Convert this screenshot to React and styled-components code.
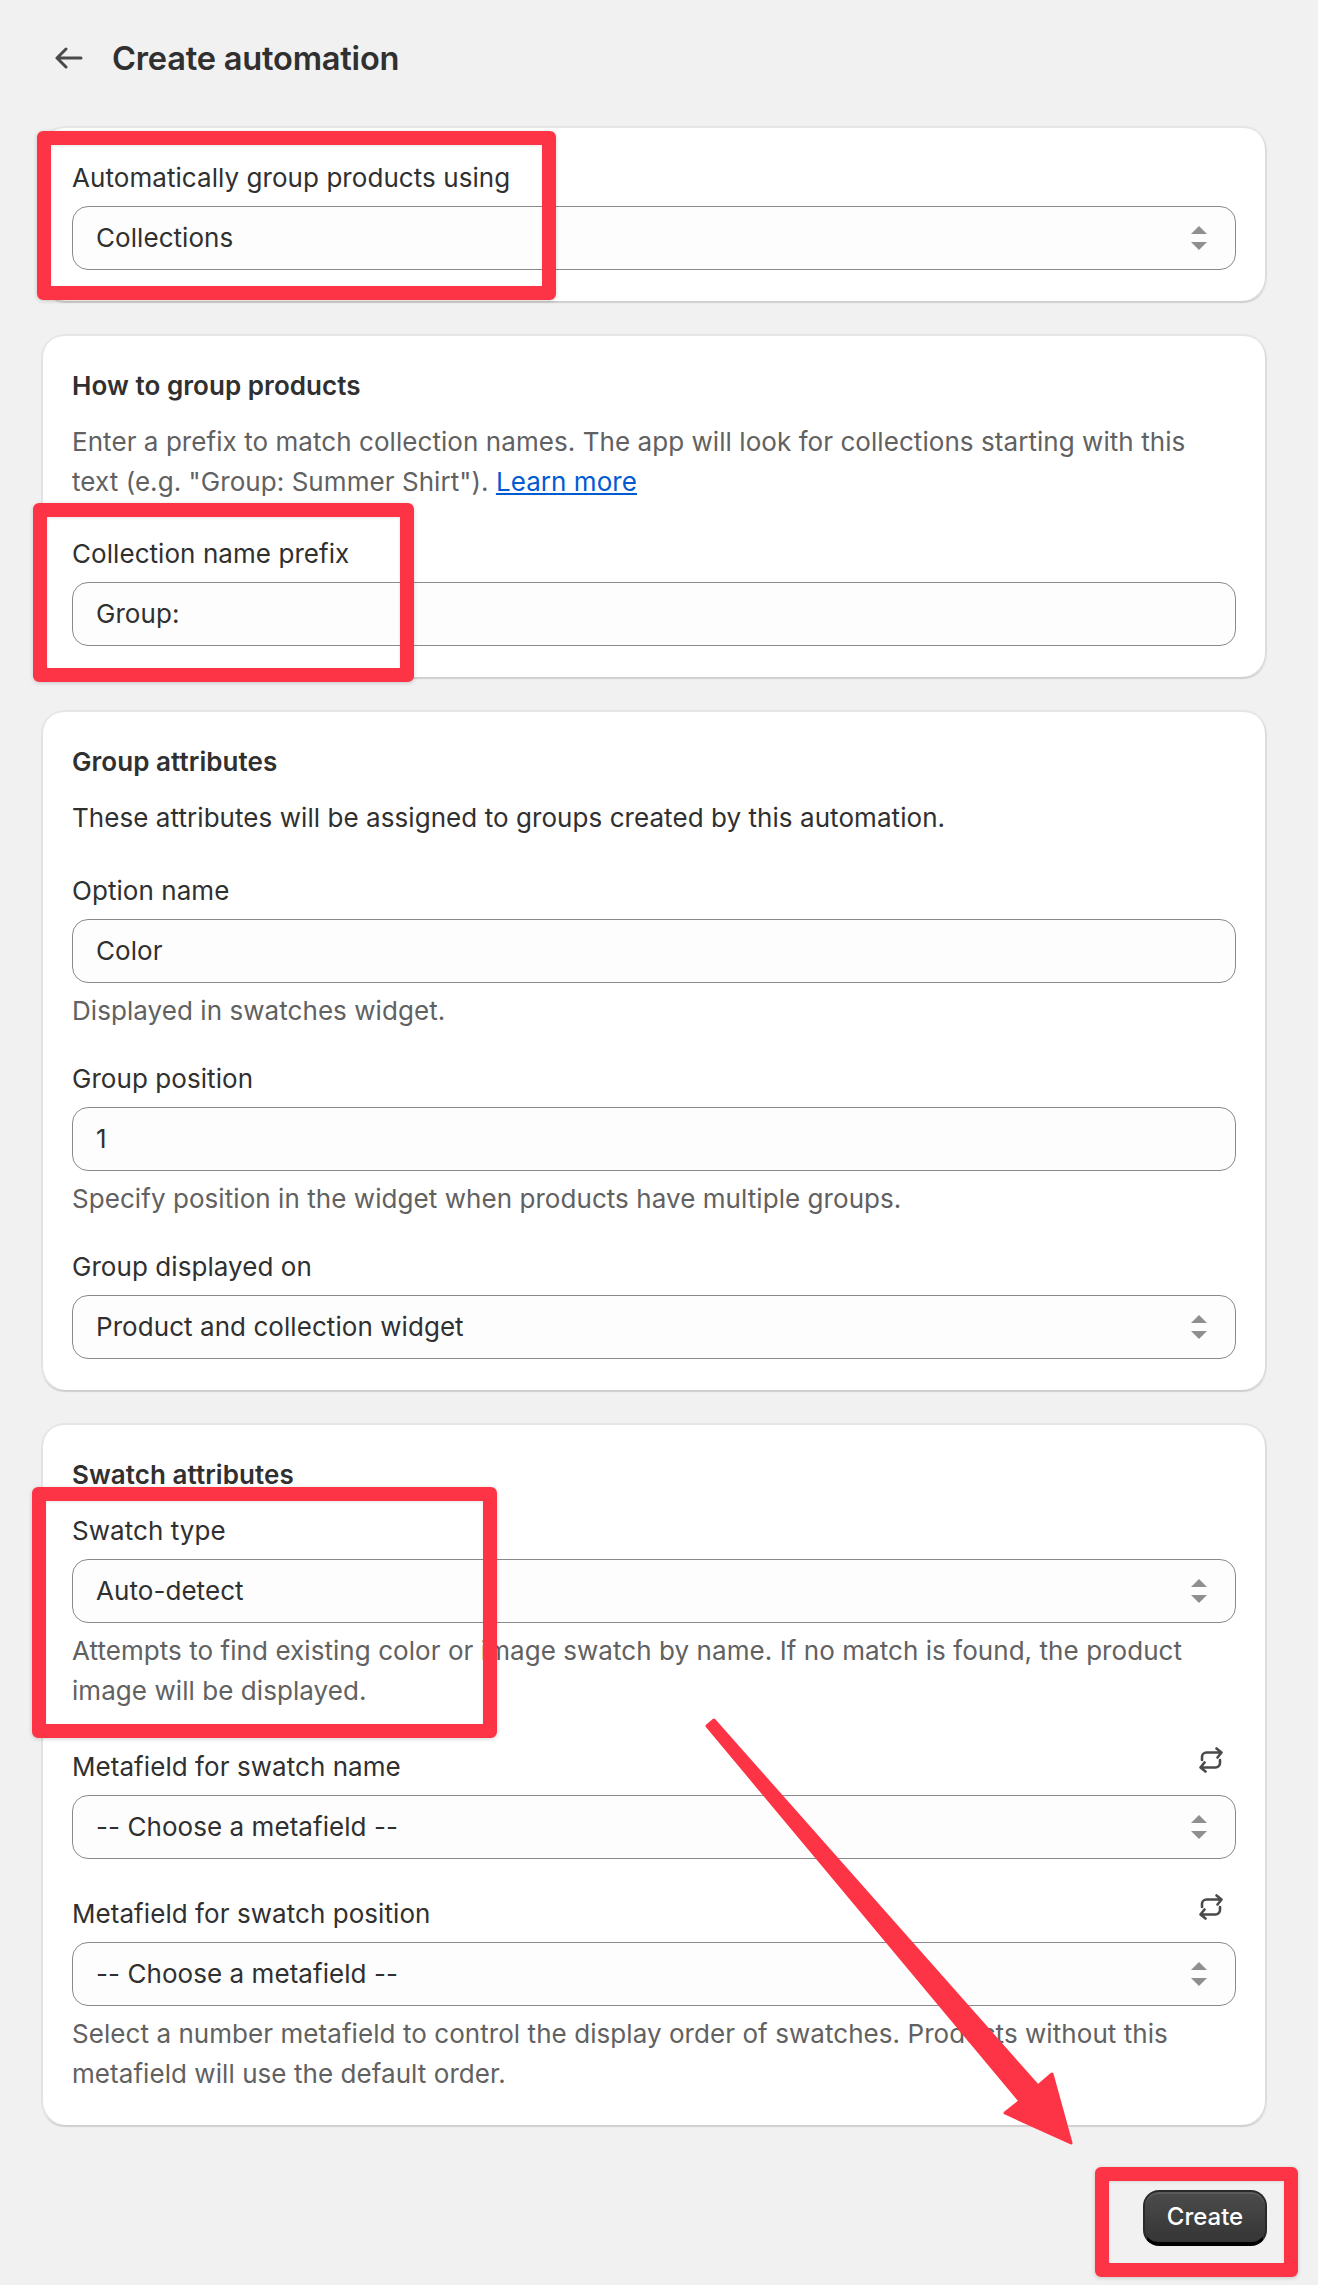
import React from 'react';
import styled, { createGlobalStyle } from 'styled-components';

const GlobalStyle = createGlobalStyle`
  html, body {
    margin: 0;
    background: #f1f1f1;
  }
  * {
    box-sizing: border-box;
  }
`;

const Page = styled.div`
  position: relative;
  width: 1318px;
  height: 2285px;
  overflow: hidden;
  padding: 38px 51px 0 41px;
  background: #f1f1f1;
  color: #303030;
  font-family: 'Inter', 'Liberation Sans', sans-serif;
  font-size: 26px;
  line-height: 40px;
  letter-spacing: 0.06px;
`;

const Header = styled.div`
  display: flex;
  align-items: center;
  gap: 29px;
  height: 40px;
  margin-bottom: 48px;
  padding-left: 14px;
`;

const Title = styled.h1`
  margin: 0;
  font-size: 32.6px;
  line-height: 40px;
  font-weight: 600;
  letter-spacing: -0.2px;
`;

const Card = styled.section`
  display: flex;
  flex-direction: column;
  margin-bottom: 33px;
  padding: 32px 31px 31px;
  background: #fff;
  border-radius: 24px;
  box-shadow:
    inset 0 2px 0 #e6e6e6,
    inset 2px 0 0 #e3e3e3,
    inset -2px 0 0 #dcdcdc,
    0 3px 1px -1px #cfcfcf;
`;

const CardTitle = styled.h2`
  margin: 0 0 16px;
  font-size: 26px;
  line-height: 40px;
  font-weight: 600;
`;

const Description = styled.p`
  max-width: 1130px;
  margin: 0;
  color: ${(p) => (p.$muted ? '#616161' : '#303030')};
`;

const Link = styled.a`
  color: #005bd3;
  text-decoration: underline;
`;

const FieldBlock = styled.div`
  margin-top: ${(p) => p.$top ?? 0}px;
`;

const Label = styled.div`
  margin-bottom: 8px;
`;

const LabelRow = styled.div`
  display: flex;
  align-items: flex-end;
  justify-content: space-between;
  height: 48px;
  margin-bottom: 8px;
`;

const SwapButton = styled.span`
  display: flex;
  margin: 0 13px 14px 0;
  color: #4a4a4a;
`;

const Control = styled.div`
  display: flex;
  align-items: center;
  justify-content: space-between;
  height: 64px;
  padding: 0 28px 0 23px;
  background: #fdfdfd;
  border: 1px solid #8a8a8a;
  border-radius: 16px;
`;

const Help = styled.div`
  margin-top: 8px;
  color: #616161;
`;

const Footer = styled.div`
  display: flex;
  justify-content: flex-end;
  margin-top: 65px;
`;

const PrimaryButton = styled.button`
  width: 124px;
  height: 56px;
  padding: 0;
  color: #fff;
  font: 500 24px/40px 'Inter', 'Liberation Sans', sans-serif;
  background: linear-gradient(#4c4c4c, #383838 85%);
  border: 2px solid #2a2a2a;
  border-bottom: 4px solid #000;
  border-radius: 16px;
  box-shadow: inset 0 2px 0 #5c5c5c;
`;

const Callout = styled.div`
  position: absolute;
  left: ${(p) => p.$x}px;
  top: ${(p) => p.$y}px;
  width: ${(p) => p.$w}px;
  height: ${(p) => p.$h}px;
  border: 14px solid #fc3445;
  border-radius: 6px;
  box-shadow: 0 1px 4px rgba(0, 0, 0, 0.18), inset 0 1px 3px rgba(0, 0, 0, 0.1);
  pointer-events: none;
`;

const ArrowLayer = styled.svg`
  position: absolute;
  left: 0;
  top: 0;
  pointer-events: none;
`;

const BackArrow = () => (
  <svg width="28" height="24" viewBox="0 0 28 24" fill="none" stroke="#4a4a4a" strokeWidth="3" strokeLinecap="round" strokeLinejoin="round">
    <path d="M2 12h24M11 3l-9 9 9 9" />
  </svg>
);

const SelectArrows = () => (
  <svg width="16" height="24" viewBox="0 0 16 24" fill="#8f8f8f">
    <path d="M8 0l8 8H0zM0 16h16l-8 8z" />
  </svg>
);

const SwapIcon = () => (
  <svg width="24" height="26" viewBox="0 0 24 26" fill="none" stroke="currentColor" strokeWidth="2.6" strokeLinecap="round" strokeLinejoin="round">
    <path d="M3 13v-3a4.500 4.500 0 0 1 4.500-4.500H22M17.500 1.500L22.500 5.500l-4 5" />
    <path d="M21 13v3a4.500 4.500 0 0 1-4.500 4.500H2M6.500 24.500L1.500 20.500l4-5" />
  </svg>
);

const SelectField = ({ value }) => (
  <Control>
    {value}
    <SelectArrows />
  </Control>
);

const App = () => (
  <Page>
    <GlobalStyle />
    <Header>
      <BackArrow />
      <Title>Create automation</Title>
    </Header>

    <Card>
      <Label>Automatically group products using</Label>
      <SelectField value="Collections" />
    </Card>

    <Card>
      <CardTitle>How to group products</CardTitle>
      <Description $muted>
        Enter a prefix to match collection names. The app will look for collections starting with this text (e.g. "Group: Summer Shirt"). <Link href="#">Learn more</Link>
      </Description>
      <FieldBlock $top={32}>
        <Label>Collection name prefix</Label>
        <Control>Group:</Control>
      </FieldBlock>
    </Card>

    <Card>
      <CardTitle>Group attributes</CardTitle>
      <Description>These attributes will be assigned to groups created by this automation.</Description>
      <FieldBlock $top={33}>
        <Label>Option name</Label>
        <Control>Color</Control>
        <Help>Displayed in swatches widget.</Help>
      </FieldBlock>
      <FieldBlock $top={28}>
        <Label>Group position</Label>
        <Control>1</Control>
        <Help>Specify position in the widget when products have multiple groups.</Help>
      </FieldBlock>
      <FieldBlock $top={28}>
        <Label>Group displayed on</Label>
        <SelectField value="Product and collection widget" />
      </FieldBlock>
    </Card>

    <Card>
      <CardTitle>Swatch attributes</CardTitle>
      <FieldBlock>
        <Label>Swatch type</Label>
        <SelectField value="Auto-detect" />
        <Help>Attempts to find existing color or image swatch by name. If no match is found, the product image will be displayed.</Help>
      </FieldBlock>
      <FieldBlock $top={28}>
        <LabelRow>
          Metafield for swatch name
          <SwapButton><SwapIcon /></SwapButton>
        </LabelRow>
        <SelectField value="-- Choose a metafield --" />
      </FieldBlock>
      <FieldBlock $top={27}>
        <LabelRow>
          Metafield for swatch position
          <SwapButton><SwapIcon /></SwapButton>
        </LabelRow>
        <SelectField value="-- Choose a metafield --" />
        <Help>Select a number metafield to control the display order of swatches. Products without this metafield will use the default order.</Help>
      </FieldBlock>
    </Card>

    <Footer>
      <PrimaryButton>Create</PrimaryButton>
    </Footer>

    {/* red annotations drawn on top of the screenshot */}
    <Callout $x={37} $y={131} $w={519} $h={169} />
    <Callout $x={33} $y={503} $w={381} $h={179} />
    <Callout $x={32} $y={1487} $w={465} $h={251} />
    <Callout $x={1095} $y={2167} $w={203} $h={110} />
    <ArrowLayer width="1318" height="2285" viewBox="0 0 1318 2285">
      <path
        d="M707 1726 L714 1720 L1038 2086 L1052 2074 L1071 2143 L1005 2113 L1020 2101 Z"
        fill="#fc3445"
        stroke="#fc3445"
        strokeWidth="3"
        strokeLinejoin="round"
      />
    </ArrowLayer>
  </Page>
);

export default App;
